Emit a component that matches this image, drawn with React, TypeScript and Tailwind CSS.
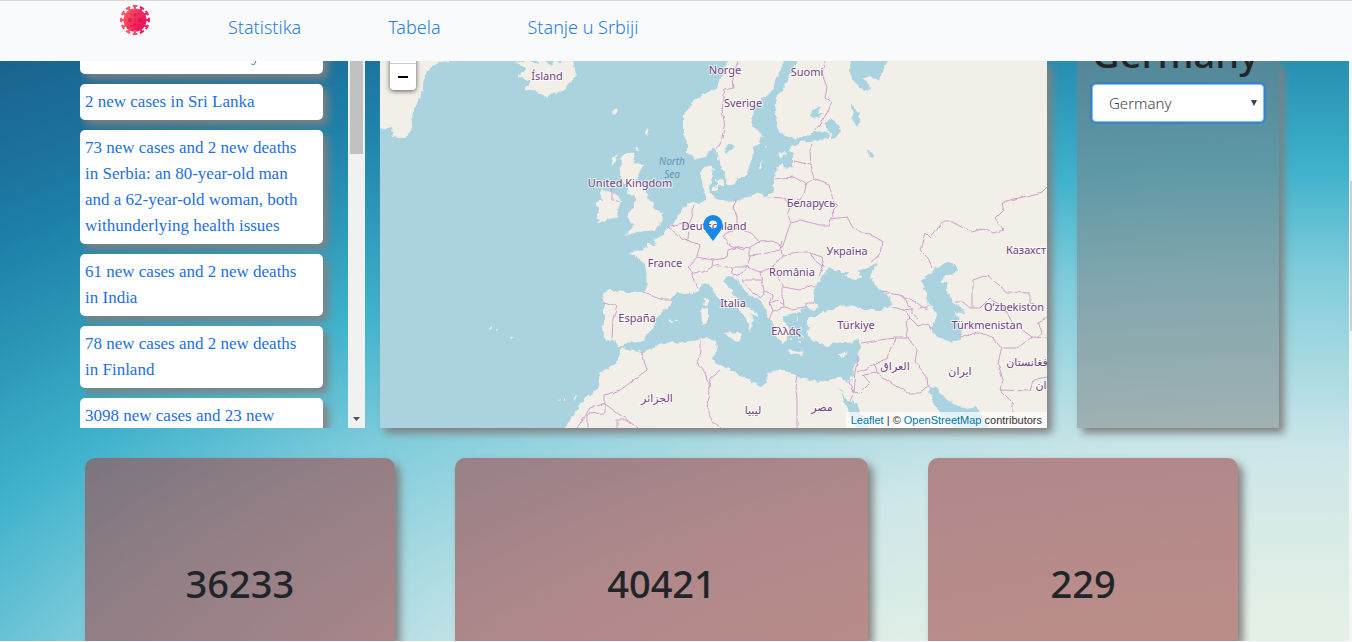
import React from "react";

const news = [
  "195 new cases in Norway",
  "2 new cases in Sri Lanka",
  "73 new cases and 2 new deaths in Serbia: an 80-year-old man and a 62-year-old woman, both withunderlying health issues",
  "61 new cases and 2 new deaths in India",
  "78 new cases and 2 new deaths in Finland",
  "3098 new cases and 23 new deaths in the United States",
];

const land = [
  // Scandinavia
  "727,61 723,73 717,87 700,97 695,100 690,108 683,115 683,127 683,133 687,143 687,152 697,159 707,156 713,148 717,149 719,160 723,170 727,178 728,185 733,185 737,178 745,178 750,165 753,153 752,148 760,143 762,135 755,128 752,120 753,107 763,98 773,90 775,80 782,67 783,55 727,55",
  // Eurasia and Africa
  "800,55 795,65 787,83 777,97 775,110 777,123 780,133 790,138 803,137 815,132 823,131 829,135 828,139 817,140 800,142 790,147 788,150 793,155 793,167 787,169 782,163 777,167 774,178 774,192 768,194 768,197 757,193 747,197 733,202 720,200 713,198 711,193 710,187 712,175 713,165 705,167 701,173 703,188 704,193 707,200 700,203 690,203 682,210 678,218 668,227 662,235 652,240 657,244 648,243 648,249 638,250 628,253 638,257 645,265 647,277 645,292 627,292 610,290 603,293 605,303 604,320 601,327 603,338 612,340 620,347 627,343 643,340 652,330 655,322 662,312 672,305 672,298 677,293 692,294 700,288 707,283 712,287 717,297 727,305 737,308 747,318 748,325 750,332 753,322 750,313 759,318 755,312 743,305 735,297 732,290 723,282 727,275 733,277 737,280 747,293 760,300 765,308 767,317 772,322 777,337 782,343 787,338 790,330 783,320 787,315 800,312 807,307 812,311 820,308 813,303 813,295 818,283 830,267 835,272 843,272 850,272 845,276 853,280 863,276 857,273 872,265 877,262 872,272 870,277 880,290 890,297 891,305 882,310 863,310 847,305 833,308 820,314 807,318 807,328 808,337 817,342 827,347 835,342 848,343 859,340 858,357 853,373 849,382 837,378 820,382 800,378 797,375 788,372 778,369 768,373 767,382 762,386 743,377 727,368 712,360 717,352 716,340 707,338 687,342 663,343 643,352 622,348 617,362 600,373 597,390 580,403 572,417 560,435 1060,435 1060,55",
  // Greenland
  "374,55 452,55 450,61 440,62 427,70 424,78 422,93 418,100 413,110 411,130 405,139 393,137 392,127 385,129 374,128",
  // Iceland
  "515,63 527,68 518,77 530,80 525,90 537,92 547,97 563,90 576,75 572,55 565,55 560,64 555,58 550,66 543,58 537,64 530,60",
  // Great Britain
  "623,153 635,153 633,162 643,165 638,177 633,182 641,184 648,197 653,208 663,213 662,223 655,230 637,232 625,235 635,225 628,220 627,213 635,208 635,198 627,193 628,187 620,178 621,165",
  // Ireland
  "603,190 615,193 621,200 618,210 617,217 597,223 599,213 597,203 603,200 600,193",
  // Danish islands, Gotland, Saaremaa
  "716,180 723,179 725,186 718,186",
  "712,186 717,185 717,190 713,190",
  "758,168 762,161 762,165 759,170",
  "778,154 786,152 787,155 780,158",
  // Corsica, Sardinia, Sicily
  "704,299 707,297 708,304 705,307",
  "701,310 708,309 708,322 702,325",
  "725,333 742,332 739,342 733,340",
  // Crete, Cyprus, Balearics
  "788,350 804,353 803,355 790,353",
  "839,354 848,352 843,357 839,356",
  "668,321 672,319 673,322 670,323",
  "676,319 679,318 679,320 676,320",
  // Hebrides, Shetland, Orkney, Faroe
  "613,158 618,154 615,163 611,168",
  "646,129 649,128 647,136 645,134",
  "635,147 639,148 637,151",
  "612,111 617,109 616,114 613,115",
  // Canaries
  "574,399 577,394 576,398 574,401",
  "564,401 567,398 566,402",
  "558,399 561,398 560,401",
];

const water = [
  "851,55 850,70 853,80 863,91 871,89 863,78 870,76 880,81 882,70 888,61 888,55",
  "825,122 832,118 842,130 838,136 832,138",
  "851,103 857,110 862,122 857,127 850,117 853,113",
  "866,150 871,152 875,157 870,158",
  "948,263 957,265 957,272 943,277 940,283 947,283 947,290 953,302 965,310 962,313 955,312 959,320 961,337 957,342 943,340 933,333 933,323 937,315 928,302 925,288 920,282 933,270 942,265",
  "928,387 937,388 947,400 963,408 978,407 981,414 990,430 955,430 945,420 938,410 932,400",
  "838,388 847,400 851,403 853,398 863,417 870,432 859,432 848,410",
  "725,148 731,144 734,147 729,152 726,154",
  "812,110 820,107 818,115 824,113 815,120 811,116",
  "808,312 818,311 820,314 810,316",
];

const borders = [
  "738,61 732,78 733,88 725,90 722,110 725,127 723,138 717,150",
  "825,61 823,77 827,87 825,97 833,103 820,124 815,131",
  "793,161 803,163 811,165 810,150 813,143",
  "811,165 814,178 806,185 804,193 800,200 783,198 767,197",
  "775,179 782,178 795,177 806,185",
  "814,178 829,184 833,200 838,205 833,210 834,218",
  "783,198 790,207 787,215 791,222 786,236 782,247 783,255",
  "791,222 800,220 820,225 828,225 830,219 847,217 853,228 863,233 870,234 882,241 880,255 872,262",
  "735,200 734,209 737,217 737,228",
  "723,235 737,228 750,233 760,242 750,247 743,250 730,245 723,235",
  "760,242 773,241 782,247",
  "694,205 692,217 688,227 687,240 700,245 697,257",
  "668,227 678,235 688,241",
  "670,226 683,223 688,227",
  "688,267 697,257 713,260 712,267 703,272 693,273 688,267",
  "693,273 694,282 697,289",
  "713,260 727,258 728,250 737,247 750,248 750,257 747,267 727,267 713,265",
  "750,255 767,253 780,250 782,240",
  "747,267 760,272 773,267 783,255",
  "732,267 733,275 742,273 747,267",
  "743,280 762,280 764,290 760,298 750,290 743,280",
  "760,272 762,280",
  "773,267 777,277 783,285 783,295 784,308 773,311 769,320",
  "764,290 772,295 770,303 777,300 784,305",
  "770,303 773,311",
  "783,287 800,290 806,286 815,287",
  "784,308 793,309 805,307 807,303 813,303",
  "783,255 800,253 810,253 814,260 823,267 818,275",
  "810,253 822,257 824,267",
  "644,293 657,298 664,300 671,300",
  "604,302 617,306 613,320 612,338",
  "642,353 647,370 627,385 620,390 605,395 605,413 587,414 587,428",
  "605,403 590,408 577,428",
  "605,404 638,428",
  "617,428 617,420 627,420",
  "701,340 701,352 697,362 705,373 709,387 708,413 713,422 722,428",
  "709,387 710,378 720,370",
  "797,376 795,387 797,397 797,428",
  "612,188 612,200 620,202",
  "860,343 880,340 895,338 908,338 905,322 910,318",
  "882,292 900,295 917,302 928,310",
  "892,307 903,310 920,308 929,305",
  "903,310 910,318 918,326 928,323 931,330",
  "903,295 907,305 912,308 912,314 918,319",
  "908,338 917,350 915,362 927,377 928,387 920,393 908,393 877,373 863,375 870,383 860,393 853,392 849,382",
  "895,338 890,350 888,358 875,365 858,372",
  "875,365 877,373",
  "858,357 855,373 853,392 850,403",
  "962,338 977,332 993,337 1002,348 998,363 1003,380 1000,390 1013,403 1013,412",
  "1002,348 1017,348 1032,337 1047,338",
  "1000,390 1030,391 1033,380 1047,377",
  "973,308 973,280 987,275 1007,292 1030,293 1030,303 1047,308",
  "955,302 963,302 970,308 980,308 990,298 1003,307 1013,323 1032,337",
  "1047,318 1038,323 1042,332 1038,337",
  "932,268 928,258 920,250 925,233 930,238 943,222 953,222 972,232 985,228 993,233 1003,230 995,219 1004,210 1002,202 1023,197 1042,192 1047,187",
];

const labels: [string, number, number][] = [
  ["Ísland", 547, 80],
  ["Norge", 725, 74],
  ["Suomi", 807, 76],
  ["Sverige", 743, 107],
  ["United Kingdom", 630, 187],
  ["Беларусь", 811, 207],
  ["Deutschland", 714, 230],
  ["France", 665, 267],
  ["Україна", 847, 255],
  ["România", 792, 276],
  ["Italia", 733, 307],
  ["España", 637, 322],
  ["Ελλάς", 786, 335],
  ["Türkiye", 856, 329],
  ["Казахст", 1026, 254],
  ["O‘zbekiston", 1014, 311],
  ["Türkmenistan", 987, 329],
  ["العراق", 895, 370],
  ["ایران", 960, 375],
  ["فغانستان", 1027, 366],
  ["ان", 1041, 389],
  ["الجزائر", 657, 402],
  ["ليبيا", 753, 414],
  ["مصر", 822, 411],
];

const islets = [
  [793, 322], [797, 318], [801, 328], [796, 333], [803, 336], [799, 342],
  [791, 340], [490, 328], [497, 331], [512, 338], [766, 146], [752, 143],
];

function VirusLogo() {
  const spikes = Array.from({ length: 12 }, (_, i) => i * 30);
  return (
    <svg viewBox="0 0 30 30" className="size-[30px]" aria-hidden="true">
      <defs>
        <linearGradient id="virus" gradientUnits="userSpaceOnUse" x1="3" y1="5" x2="27" y2="20">
          <stop offset="0" stopColor="#fb6a5c" />
          <stop offset="0.5" stopColor="#f8315c" />
          <stop offset="1" stopColor="#ec0a5b" />
        </linearGradient>
      </defs>
      <circle cx="15" cy="15" r="11.5" fill="url(#virus)" />
      {spikes.map((a) => (
        <path
          key={a}
          d="M15 5V1.200M12.700 1.100H17.300"
          stroke={a > 0 && a < 180 ? "#f0195b" : "#f4506a"}
          strokeWidth="2"
          fill="none"
          transform={`rotate(${a} 15 15)`}
        />
      ))}
      <g fill="#c2185b" opacity="0.6">
        <circle cx="15" cy="10" r="1.8" />
        <circle cx="10" cy="15" r="2.2" />
        <circle cx="20" cy="15" r="2.2" />
        <circle cx="15" cy="20" r="1.8" />
        <circle cx="11" cy="9" r="1" />
        <circle cx="19" cy="9" r="1" />
        <circle cx="11" cy="21" r="1" />
        <circle cx="19" cy="21" r="1" />
        <rect x="14.5" y="13" width="1" height="4" />
      </g>
    </svg>
  );
}

function EuropeMap() {
  return (
    <svg
      viewBox="380 61 667 367"
      preserveAspectRatio="xMidYMid slice"
      className="block size-full bg-[#aad3df]"
      role="img"
      aria-label="Map"
    >
      <defs>
        <filter id="coast" filterUnits="userSpaceOnUse" x="370" y="50" width="690" height="390">
          <feTurbulence type="fractalNoise" baseFrequency="0.16" numOctaves="3" seed="4" />
          <feDisplacementMap in="SourceGraphic" scale="6" xChannelSelector="R" yChannelSelector="G" />
        </filter>
        <filter id="edge" filterUnits="userSpaceOnUse" x="370" y="50" width="690" height="390">
          <feTurbulence type="fractalNoise" baseFrequency="0.1" numOctaves="2" seed="9" />
          <feDisplacementMap in="SourceGraphic" scale="4" xChannelSelector="R" yChannelSelector="G" />
        </filter>
      </defs>
      <g filter="url(#coast)">
        <g fill="#f2efe9">
          {land.map((p) => (
            <polygon key={p} points={p} />
          ))}
          {islets.map(([x, y]) => (
            <circle key={`${x}-${y}`} cx={x} cy={y} r="1" />
          ))}
        </g>
        <g fill="#aad3df">
          {water.map((p) => (
            <polygon key={p} points={p} />
          ))}
        </g>
      </g>
      <g fill="none" stroke="#cf9fcb" strokeWidth="1" strokeLinejoin="round" filter="url(#edge)">
        {borders.map((p) => (
          <polyline key={p} points={p} />
        ))}
      </g>
      <g
        textAnchor="middle"
        fill="#74417f"
        stroke="#ffffff"
        strokeOpacity="0.7"
        strokeWidth="2"
        paintOrder="stroke"
        className="font-['Noto_Sans','DejaVu_Sans',sans-serif] text-[11px]"
      >
        {labels.map(([name, x, y]) => (
          <text key={name} x={x} y={y}>
            {name}
          </text>
        ))}
      </g>
      <g textAnchor="middle" fill="#5f93b8" className="font-['Noto_Sans',sans-serif] text-[10px] italic">
        <text x="672" y="165">North</text>
        <text x="672" y="178">Sea</text>
      </g>
      <path
        fill="#1489ea"
        fillRule="evenodd"
        d="M713 215a9.5 9.5 0 0 1 9.500 9.500c0 5.500-5 10-9.500 16.500c-4.500-6.500-9.500-11-9.500-16.500a9.500 9.500 0 0 1 9.500-9.500zM713 220.500a4 4 0 1 0 0 8a4 4 0 1 0 0-8z"
      />
    </svg>
  );
}

function StatCard({ value, className }: { value: string; className: string }) {
  return (
    <section
      className={`rounded-t-[10px] bg-[#9e4b4c]/60 pt-[101px] text-center shadow-[5px_5px_8px_gray] ${className}`}
    >
      <h2 className="text-[38px] leading-[48px] font-medium text-[#212529]">{value}</h2>
    </section>
  );
}

export default function App() {
  return (
    <div className="flex h-screen flex-col overflow-hidden bg-[#f8f9fa] font-['Noto_Sans',sans-serif] text-[#212529]">
      <header className="flex h-[61px] shrink-0 items-start border-t border-[#d6d8da] bg-[#f8fafc] pt-1 pl-[120px]">
        <a href="#top" aria-label="Početna">
          <VirusLogo />
        </a>
        <nav className="ml-[78px] flex gap-[87px] pt-[7px] text-[18px] leading-[30px] font-light text-[#2a7fd8]">
          <a href="#statistika">Statistika</a>
          <a href="#tabela">Tabela</a>
          <a href="#srbija">Stanje u Srbiji</a>
        </nav>
      </header>

      <div className="flex min-h-0 flex-1 pb-px">
        <main className="flex min-w-0 flex-1 flex-col gap-[30px] overflow-hidden bg-[radial-gradient(163%_179%_at_96%_144%,#e8f2e6_20%,#e4f0e6_27%,#cce6e8_43%,#80ccdb_60%,#3fb2cc_70%,#2a94b6_79%,#1d80a8_86%,#1c719c_92%,#1a6290_100%)]">
          <div className="flex h-[367px] shrink-0 pr-[70px] pl-[80px]">
            <section className="mr-[15px] flex w-[285px] shrink-0 overflow-hidden">
              <ul className="-mt-[23px] flex flex-1 flex-col gap-[10px] pr-[25px] font-['Liberation_Serif',serif] text-[17px] leading-[26px] text-[#1d6fe0]">
                {news.map((item) => (
                  <li key={item} className="rounded-[5px] bg-white py-[5px] pr-[14px] pl-[5px] shadow-[5px_5px_8px_gray]">
                    {item}
                  </li>
                ))}
              </ul>
              <div className="flex w-[17px] flex-col items-center justify-between bg-[#f1f1f1]">
                <div className="h-[93px] w-[13px] bg-[#c1c1c1]" />
                <svg viewBox="0 0 7 4" className="mb-[7px] h-1 w-[7px]" aria-hidden="true">
                  <path d="M0 0h7L3.500 4z" fill="#505050" />
                </svg>
              </div>
            </section>

            <section className="min-w-0 flex-1 shadow-[5px_5px_8px_gray]">
              <div className="relative size-full overflow-hidden">
                <EuropeMap />
                <div className="absolute -top-[24px] left-[10px] flex w-[26px] flex-col rounded-[4px] bg-white shadow-[0_1px_5px_rgba(0,0,0,0.65)]">
                  <button type="button" aria-label="Zoom in" className="h-[27px] border-b border-[#ccc]" />
                  <button type="button" aria-label="Zoom out" className="flex h-[26px] items-center justify-center">
                    <svg viewBox="0 0 10 2" className="h-0.5 w-[10px]" aria-hidden="true">
                      <path d="M0 0h10v2H0z" />
                    </svg>
                  </button>
                </div>
                <p className="absolute right-0 bottom-0 bg-white/70 px-[5px] font-['Liberation_Sans',sans-serif] text-[11px] leading-[16px] text-[#333]">
                  <a href="#leaflet" className="text-[#0078a8]">Leaflet</a>
                  {" | © "}
                  <a href="#osm" className="text-[#0078a8]">OpenStreetMap</a>
                  {" contributors"}
                </p>
              </div>
            </section>

            <aside className="ml-[30px] w-[202px] shrink-0 bg-[#808080]/50 px-[15px] shadow-[5px_5px_8px_gray]">
              <div className="-mt-[32px] h-[55px]">
                <h1 className="text-[38px] leading-[48px] font-medium">Germany</h1>
              </div>
              <div className="relative">
                <select
                  aria-label="Country"
                  defaultValue="Germany"
                  className="h-[38px] w-full appearance-none rounded-[4px] border border-[#80bdff] bg-white pl-4 text-[15px] font-light text-[#3c4248] shadow-[0_0_0_2px_rgba(40,125,215,0.6)] outline-none"
                >
                  <option>Germany</option>
                  <option>Serbia</option>
                  <option>Italy</option>
                </select>
                <svg viewBox="0 0 6 6" className="pointer-events-none absolute top-4 right-[7px] size-[6px]" aria-hidden="true">
                  <path d="M0 0h6L3 6z" fill="#3c4043" />
                </svg>
              </div>
            </aside>
          </div>

          <div className="flex min-h-0 flex-1 gap-[60px] pr-[111px] pl-[85px]">
            <StatCard value="36233" className="flex-[3]" />
            <StatCard value="40421" className="flex-[4]" />
            <StatCard value="229" className="flex-[3]" />
          </div>
        </main>
        <div className="flex w-[3px] shrink-0 flex-col items-end bg-[#f4f4f4] pt-[120px]">
          <div className="h-[150px] w-0.5 bg-[#cfcfcf]" />
        </div>
      </div>
    </div>
  );
}
